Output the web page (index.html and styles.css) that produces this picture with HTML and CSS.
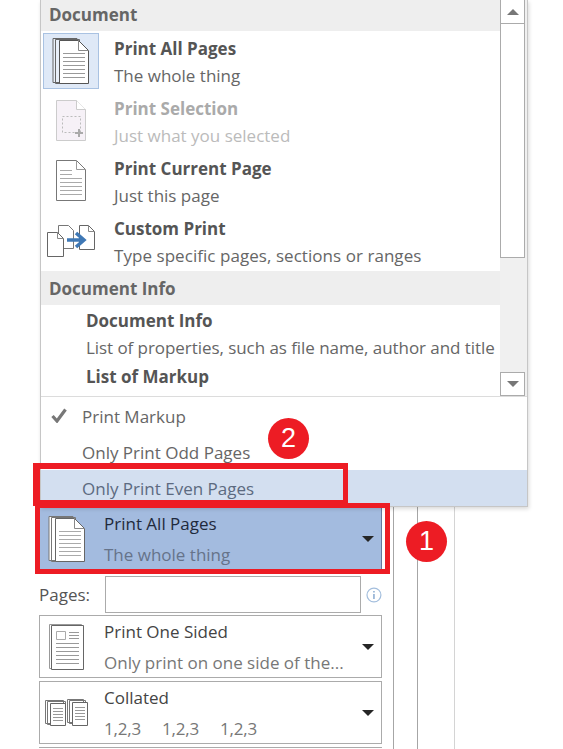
FILE: index.html
```html
<!DOCTYPE html>
<html lang="en">
<head>
    <meta charset="UTF-8">
    <meta name="viewport" content="width=device-width, initial-scale=1.0">
    <title>Print Settings</title>
    <link rel="stylesheet" href="styles.css">
</head>
<body>
    <div class="page">
        <div class="settings">
            <div class="dropdown active">
                <svg class="icon-stack" width="38" height="48" viewBox="0 0 38 48">
                    <path d="M1 1.500h24v44H1zM3.500 2.500h24v44h-24z" fill="#fff" stroke="#777"/>
                    <path d="M7.500 3.500h19l10 10v33h-29z" fill="#fff" stroke="#666"/>
                    <path d="M26.500 3.500v10h10" fill="none" stroke="#888"/>
                    <path d="M11 16.500h22M11 20.500h22M11 24.500h22M11 28.500h22M11 32.500h22M11 36.500h22M11 40.500h22" stroke="#aaa"/>
                </svg>
                <div class="dropdown-text">
                    <div class="dropdown-title">Print All Pages</div>
                    <div class="dropdown-sub">The whole thing</div>
                </div>
                <div class="arrow"></div>
            </div>

            <div class="pages-row">
                <label class="pages-label">Pages:</label>
                <div class="pages-input"></div>
                <svg class="info-icon" width="16" height="16" viewBox="0 0 16 16">
                    <circle cx="8" cy="8" r="7" fill="none" stroke="#a3bedd" stroke-width="1.200"/>
                    <path d="M8 7v5" stroke="#7fa3cc" stroke-width="1.400"/>
                    <path d="M8 4v1.500" stroke="#7fa3cc" stroke-width="1.400"/>
                </svg>
            </div>

            <div class="dropdown">
                <svg class="icon-sided" width="36" height="46" viewBox="0 0 36 46">
                    <path d="M.500.500h32v44H.500z" fill="#fff" stroke="#999"/>
                    <path d="M2.500 1.500h32v44h-32z" fill="#fff" stroke="#666"/>
                    <path d="M7.500 7.500h9v8h-9z" fill="none" stroke="#aaa"/>
                    <path d="M20 8.500h10M20 11.500h10M20 14.500h10M7 19.500h23M7 23.500h23M7 27.500h23M7 31.500h23M7 35.500h23M7 39.500h23" stroke="#999"/>
                </svg>
                <div class="dropdown-text">
                    <div class="dropdown-title">Print One Sided</div>
                    <div class="dropdown-sub">Only print on one side of the...</div>
                </div>
                <div class="arrow"></div>
            </div>

            <div class="dropdown">
                <svg class="icon-collated" width="44" height="27" viewBox="0 0 44 27">
                    <path d="M.500 1.500h18v23H.500zM2.500 2.500h18v23h-18z" fill="#fff" stroke="#777"/>
                    <path d="M5.500 4.500h15v22h-15z" fill="#fff" stroke="#666"/>
                    <path d="M8 9.500h10M8 12.500h10M8 15.500h10M8 18.500h10M8 21.500h10" stroke="#999"/>
                    <path d="M22.500.500h16v23h-16zM24.500 1.500h16v23h-16z" fill="#fff" stroke="#777"/>
                    <path d="M27.500 3.500h15v23h-15z" fill="#fff" stroke="#666"/>
                    <path d="M30 8.500h10M30 11.500h10M30 14.500h10M30 17.500h10M30 20.500h10" stroke="#999"/>
                </svg>
                <div class="dropdown-text">
                    <div class="dropdown-title">Collated</div>
                    <div class="dropdown-sub collate-nums"><span>1,2,3</span><span>1,2,3</span><span>1,2,3</span></div>
                </div>
                <div class="arrow"></div>
            </div>

            <div class="dropdown cut-off"></div>
        </div>
        <div class="gutter"></div>
        <div class="gutter-wide"></div>
    </div>

    <div class="popup">
        <div class="popup-list">
            <div class="list-content">
                <div class="group-header">Document</div>

                <div class="list-item">
                    <div class="item-icon selected">
                        <svg width="38" height="48" viewBox="0 0 38 48">
                            <path d="M1 1.500h24v44H1zM3.500 2.500h24v44h-24z" fill="#e8eff9" stroke="#666"/>
                            <path d="M7.500 3.500h19l10 10v33h-29z" fill="#fff" stroke="#555"/>
                            <path d="M26.500 3.500v10h10" fill="none" stroke="#888"/>
                            <path d="M11 16.500h22M11 20.500h22M11 24.500h22M11 28.500h22M11 32.500h22M11 36.500h22M11 40.500h22" stroke="#999"/>
                        </svg>
                    </div>
                    <div>
                        <div class="item-title">Print All Pages</div>
                        <div class="item-sub">The whole thing</div>
                    </div>
                </div>

                <div class="list-item disabled">
                    <div class="item-icon">
                        <svg width="32" height="44" viewBox="0 0 32 44">
                            <path d="M1.500 1.500h20l9 9v31h-29z" fill="#f6f1f7" stroke="#ccc"/>
                            <path d="M21.500 1.500v9h9" fill="#fff" stroke="#ccc"/>
                            <path d="M7.500 17.500h18v16h-18z" fill="none" stroke="#bbb" stroke-dasharray="2 2"/>
                            <path d="M24 30v8M20 34h8" stroke="#aaa" stroke-width="2"/>
                        </svg>
                    </div>
                    <div>
                        <div class="item-title">Print Selection</div>
                        <div class="item-sub">Just what you selected</div>
                    </div>
                </div>

                <div class="list-item">
                    <div class="item-icon">
                        <svg width="32" height="44" viewBox="0 0 32 44">
                            <path d="M1.500 1.500h20l9 9v31h-29z" fill="#fff" stroke="#777"/>
                            <path d="M21.500 1.500v9h9" fill="none" stroke="#999"/>
                            <path d="M5 11.500h12M5 15.500h12M5 19.500h22M5 23.500h22M5 27.500h22M5 31.500h22M5 35.500h22" stroke="#aaa"/>
                        </svg>
                    </div>
                    <div>
                        <div class="item-title">Print Current Page</div>
                        <div class="item-sub">Just this page</div>
                    </div>
                </div>

                <div class="list-item">
                    <div class="item-icon">
                        <svg width="50" height="34" viewBox="0 0 50 34">
                            <path d="M12.500 1.500h10l5 5v18h-15z" fill="#fff" stroke="#777"/>
                            <path d="M1.500 8.500h10l6 6v18h-16z" fill="#fff" stroke="#666"/>
                            <path d="M33.500 1.500h9l6 6v18h-15z" fill="#fff" stroke="#666"/>
                            <path d="M11.500 8.500v6h6M42.500 1.500v6h6" fill="none" stroke="#888"/>
                            <path d="M21 16h15" stroke="#3f78b5" stroke-width="3.500"/>
                            <path d="M30 9l8 7-8 7" fill="none" stroke="#3f78b5" stroke-width="3.500"/>
                        </svg>
                    </div>
                    <div>
                        <div class="item-title">Custom Print</div>
                        <div class="item-sub wide">Type specific pages, sections or ranges</div>
                    </div>
                </div>

                <div class="group-header tall">Document Info</div>

                <div class="info-item">
                    <div class="item-title">Document Info</div>
                    <div class="item-sub narrow">List of properties, such as file name, author and title</div>
                </div>
                <div class="info-item">
                    <div class="item-title">List of Markup</div>
                </div>
            </div>

            <div class="scrollbar">
                <div class="scroll-btn"><div class="scroll-up"></div></div>
                <div class="scroll-thumb"></div>
                <div class="scroll-track"></div>
                <div class="scroll-btn down"><div class="scroll-down"></div></div>
            </div>
        </div>

        <div class="popup-menu">
            <div class="menu-item">
                <svg class="check" width="16" height="15" viewBox="0 0 16 15">
                    <path d="M1.500 8l4.500 5L14.500 1.500" fill="none" stroke="#777" stroke-width="3.200"/>
                </svg>
                Print Markup
            </div>
            <div class="menu-item">Only Print Odd Pages</div>
            <div class="menu-item hovered">Only Print Even Pages</div>
        </div>
    </div>

    <div class="callout-box box-even"></div>
    <div class="callout-box box-pages"></div>
    <div class="badge badge-two">2</div>
    <div class="badge badge-one">1</div>
</body>
</html>
```

FILE: styles.css
```css
* {
    margin: 0;
    padding: 0;
    box-sizing: border-box;
}

body {
    font-family: "Open Sans", "Noto Sans", sans-serif;
    background-color: white;
    color: #555;
    width: 563px;
    height: 749px;
    overflow: hidden;
    position: relative;
}

.page {
    display: flex;
    height: 749px;
}

.settings {
    width: 394px;
    padding: 508px 11px 0 39px;
    border-right: 1px solid #a6a6a6;
    display: flex;
    flex-direction: column;
}

.gutter {
    width: 24px;
    border-right: 1px solid #a6a6a6;
}

.gutter-wide {
    width: 37px;
    border-right: 1px solid #d4d4d4;
}

.dropdown {
    height: 63px;
    flex-shrink: 0;
    margin-bottom: 3px;
    border: 1px solid #ababab;
    position: relative;
    display: flex;
    align-items: center;
}

.dropdown.active {
    height: 61px;
    margin-bottom: 7px;
    background-color: #a3bbdf;
    border: none;
    border-right: 1px solid #66799c;
}

.dropdown.cut-off {
    height: 1px;
    margin-bottom: 0;
    border-width: 1px 0 0 0;
}

.dropdown svg {
    flex-shrink: 0;
}

.icon-stack {
    margin-left: 9px;
}

.icon-sided {
    margin-left: 9px;
}

.icon-collated {
    margin-left: 5px;
}

.dropdown-text {
    position: absolute;
    left: 64px;
    top: 0;
}

.active .dropdown-text {
    left: 65px;
}

.dropdown-title {
    font-size: 17px;
    line-height: 24px;
    margin-top: 4px;
    color: #444;
}

.active .dropdown-title {
    color: #1f2a3c;
}

.dropdown-sub {
    font-size: 17px;
    line-height: 24px;
    margin-top: 7px;
    color: #777;
}

.active .dropdown-sub {
    color: #66738a;
}

.collate-nums {
    display: flex;
    letter-spacing: -0.2px;
}

.collate-nums span {
    width: 58px;
}

.arrow {
    position: absolute;
    right: 7px;
    top: 50%;
    margin-top: -3px;
    border-left: 6px solid transparent;
    border-right: 6px solid transparent;
    border-top: 6px solid #262626;
}

.pages-row {
    height: 37px;
    flex-shrink: 0;
    margin-bottom: 2px;
    display: flex;
    align-items: center;
}

.pages-label {
    width: 66px;
    font-size: 17px;
    color: #555;
}

.pages-input {
    width: 258px;
    height: 37px;
    border: 1px solid #ababab;
}

.info-icon {
    margin-left: 5px;
}

/* popup list over the settings */
.popup {
    position: absolute;
    left: 40px;
    top: 0;
    width: 488px;
    height: 507px;
    background: white;
    border-left: 1px solid #c6c6c6;
    border-right: 1px solid #c6c6c6;
    border-bottom: 1px solid #c6c6c6;
    box-shadow: 1px 2px 4px rgba(0, 0, 0, 0.15);
}

.popup-list {
    display: flex;
    height: 397px;
    border-bottom: 1px solid #dcdcdc;
}

.list-content {
    width: 459px;
    overflow: hidden;
}

.group-header {
    height: 31px;
    background-color: #eeeeee;
    padding-left: 8px;
    font-size: 17px;
    font-weight: 700;
    line-height: 30px;
    color: #666;
}

.group-header.tall {
    height: 34px;
    line-height: 35px;
}

.list-item {
    height: 60px;
    display: flex;
    position: relative;
    padding-left: 73px;
    padding-top: 4px;
}

.item-icon {
    position: absolute;
    left: 2px;
    top: 2px;
    width: 56px;
    height: 56px;
    display: flex;
    align-items: center;
    justify-content: center;
}

.item-icon.selected {
    background-color: #dfe9f7;
    border: 1px solid #a9c2e2;
}

.item-title {
    font-size: 17px;
    font-weight: 700;
    line-height: 27px;
    color: #555;
}

.item-sub {
    font-size: 17px;
    line-height: 27px;
    color: #666;
    white-space: nowrap;
}

.item-sub.wide {
    letter-spacing: 0.05px;
}

.item-sub.narrow {
    letter-spacing: -0.06px;
}

.disabled .item-title {
    color: #aaa;
}

.disabled .item-sub {
    color: #bbb;
}

.info-item {
    padding-left: 45px;
    padding-top: 2px;
}

.scrollbar {
    width: 27px;
    background-color: #f0f0f0;
    padding-right: 2px;
    display: flex;
    flex-direction: column;
    flex-shrink: 0;
}

.scroll-btn {
    height: 23px;
    background: white;
    border-left: 1px solid #ababab;
    border-right: 1px solid #ababab;
    display: flex;
    align-items: center;
    justify-content: center;
}

.scroll-btn.down {
    height: 24px;
    border: 1px solid #ababab;
}

.scroll-up {
    border-left: 6px solid transparent;
    border-right: 6px solid transparent;
    border-bottom: 6px solid #777;
}

.scroll-down {
    border-left: 6px solid transparent;
    border-right: 6px solid transparent;
    border-top: 6px solid #777;
}

.scroll-thumb {
    height: 235px;
    background: white;
    border: 1px solid #ababab;
}

.scroll-track {
    flex: 1;
}

.popup-menu {
    display: flex;
    flex-direction: column;
    padding-top: 1px;
}

.menu-item {
    height: 36px;
    padding-left: 41px;
    position: relative;
    font-size: 17px;
    line-height: 38px;
    color: #666;
}

.menu-item.hovered {
    background-color: #d3dff0;
    color: #5c6a80;
}

.check {
    position: absolute;
    left: 10px;
    top: 10px;
}

/* red annotations */
.callout-box {
    position: absolute;
    border: 5px solid #ed1c24;
}

.box-even {
    left: 33px;
    top: 463px;
    width: 315px;
    height: 43px;
    border-width: 6px 5px 6px 7px;
}

.box-pages {
    left: 35px;
    top: 503px;
    width: 355px;
    height: 71px;
}

.badge {
    position: absolute;
    width: 41px;
    height: 41px;
    border-radius: 50%;
    background-color: #ed1c24;
    color: white;
    font-family: "Liberation Sans", sans-serif;
    font-size: 27px;
    line-height: 41px;
    text-align: center;
}

.badge-one {
    left: 406px;
    top: 521px;
}

.badge-two {
    left: 268px;
    top: 418px;
}
```
